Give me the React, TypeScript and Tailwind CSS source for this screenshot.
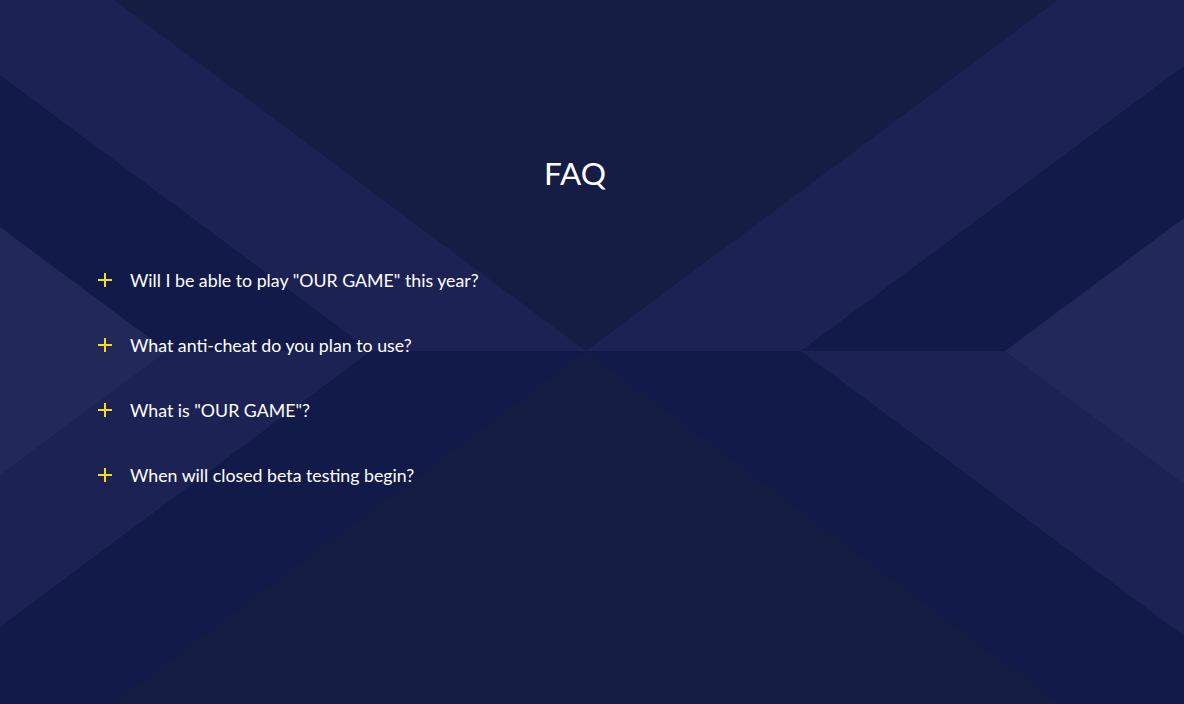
import React from "react";

const questions = [
  'Will I be able to play "OUR GAME" this year?',
  "What anti-cheat do you plan to use?",
  'What is "OUR GAME"?',
  "When will closed beta testing begin?",
];

function Background() {
  return (
    <svg
      className="absolute inset-0 h-full w-full"
      viewBox="0 0 1184 704"
      preserveAspectRatio="none"
    >
      {/* top half */}
      <rect x="0" y="0" width="1184" height="352" fill="#22295a" />
      <polygon points="0,0 1184,0 1184,218 1005,351 167,351 0,227" fill="#121a49" />
      <polygon points="0,0 1184,0 1184,66 801,351 371,351 0,75" fill="#1c2254" />
      <polygon points="114,0 1058,0 586,351" fill="#161d45" />
      {/* bottom half */}
      <rect x="0" y="351" width="1184" height="353" fill="#22295a" />
      <polygon points="0,475 167,351 1005,351 1184,484 1184,704 0,704" fill="#1c2254" />
      <polygon points="0,627 371,351 801,351 1184,636 1184,704 0,704" fill="#121a49" />
      <polygon points="586,351 1060,704 112,704" fill="#151c44" />
    </svg>
  );
}

function Plus() {
  return (
    <svg width="14" height="14" viewBox="0 0 14 14" className="shrink-0">
      <path d="M7 0V14M0 7H14" stroke="#f3dc1a" strokeWidth="2" />
    </svg>
  );
}

export default function App() {
  return (
    <div
      className="relative h-[704px] w-full overflow-hidden bg-[#161d45]"
      style={{ fontFamily: "Lato, 'Open Sans', sans-serif" }}
    >
      <Background />
      <div className="relative flex flex-col pt-[155px]">
        <h1 className="flex justify-center pr-[34px] text-[31.5px] leading-[36px] font-normal text-white">
          FAQ
        </h1>
        <ul className="mt-[56px] flex flex-col pl-[98px]">
          {questions.map((q) => (
            <li key={q} className="flex h-[65px] items-center gap-[18px]">
              <Plus />
              <span className="text-[17.75px] leading-[24px] text-white">{q}</span>
            </li>
          ))}
        </ul>
      </div>
    </div>
  );
}
